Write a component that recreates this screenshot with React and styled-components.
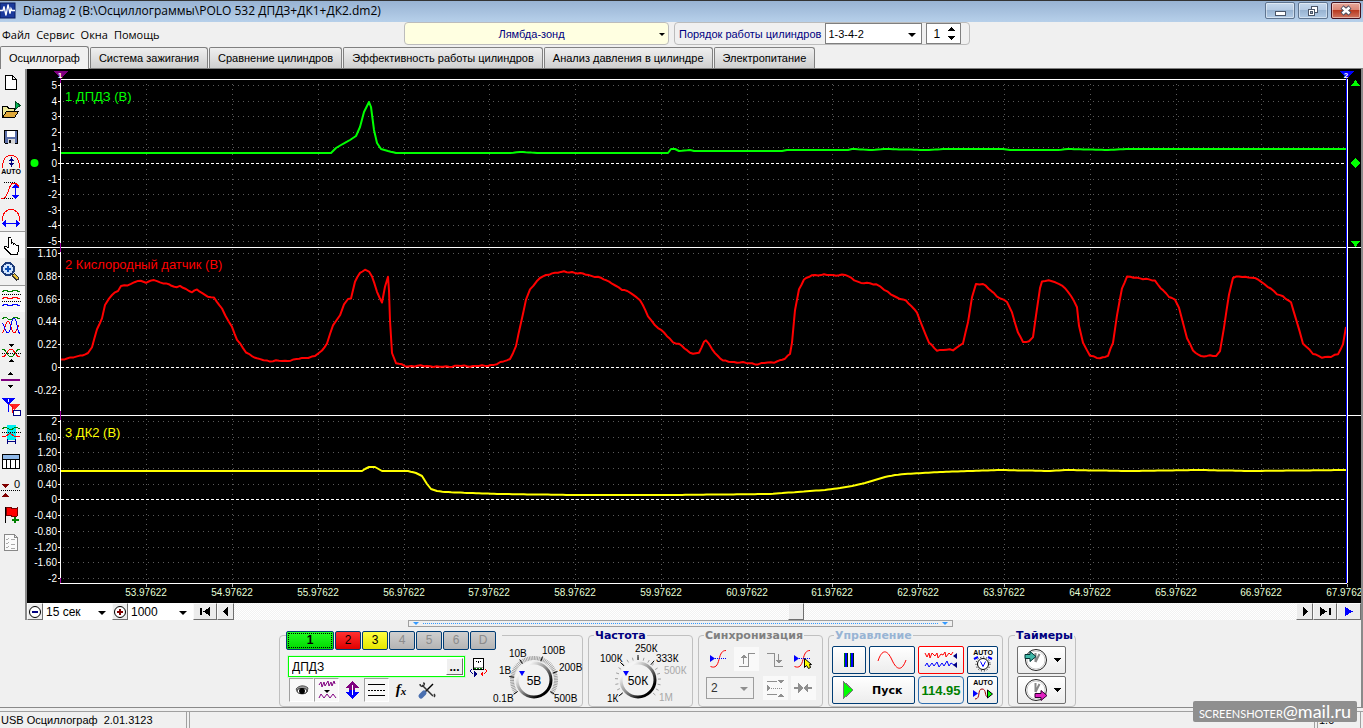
import React, { useState } from 'react';
import styled, { createGlobalStyle, css } from 'styled-components';

const GlobalStyle = createGlobalStyle`
  * {
    box-sizing: border-box;
  }

  body {
    margin: 0;
    background: #f0f0f0;
    color: #000000;
    font-family: 'Liberation Sans', Arial, sans-serif;
    font-size: 12px;
  }

  button, input, select {
    font: inherit;
    color: inherit;
  }
`;

/* ---------- window frame ---------- */

const Window = styled.div`
  display: flex;
  flex-direction: column;
  min-height: 100vh;
  overflow: hidden;
`;

const TitleBar = styled.header`
  display: flex;
  align-items: flex-start;
  height: 22px;
  border-top: 1px solid #333333;
  background: linear-gradient(#98b3d3, #b7d0ea);
`;

const TitleText = styled.h1`
  flex: 1;
  margin: 0 0 0 7px;
  font: 12px/20px 'Open Sans', sans-serif;
`;

const WindowButtons = styled.div`
  display: flex;
  gap: 3px;
  padding: 1px 2px 0 0;
`;

const WindowButton = styled.button`
  display: flex;
  align-items: center;
  justify-content: center;
  width: 30px;
  height: 17px;
  padding: 0;
  border: 1px solid ${(props) => (props.$close ? '#43101d' : '#5f7590')};
  border-radius: 2px;
  background: ${(props) =>
    props.$close
      ? 'linear-gradient(#e6a89b 0%, #d98473 48%, #b93a20 50%, #cf7560 100%)'
      : 'linear-gradient(#c5d8ec 0%, #b4cae3 48%, #98b3d1 50%, #b2cbe6 100%)'};
  box-shadow: inset 0 0 0 1px rgba(255, 255, 255, 0.45);
`;

const Header = styled.div`
  display: flex;
  align-items: flex-start;
  height: 24px;
`;

const Menu = styled.nav`
  display: flex;
  gap: 6px;
  flex: 0 0 404px;
  padding-left: 2px;
`;

const MenuLink = styled.a`
  color: #000000;
  font: 11px/26px 'Open Sans', sans-serif;
  text-decoration: none;
`;

const SelectBox = styled.span`
  position: relative;
  display: block;
  width: ${(props) => props.$width}px;
  height: ${(props) => props.$height}px;

  &::after {
    content: '';
    position: absolute;
    right: ${(props) => props.$inset || 6}px;
    top: 50%;
    margin-top: -1px;
    border: solid transparent;
    border-width: ${(props) => (props.$inset ? '3px 3px 0' : '4px 4px 0')};
    border-top-color: ${(props) => (props.$dim ? '#8f8f8f' : '#000000')};
    pointer-events: none;
  }
`;

const Select = styled.select`
  appearance: none;
  display: block;
  width: 100%;
  height: 100%;
  padding: 0 2px;
  border: 1px solid #7f7f7f;
  border-radius: 0;
  background: #ffffff;
  outline: none;
  font-size: 11px;

  ${(props) => props.$plain && css`
    border-color: #ffffff;
    font-size: 12px;
  `}

  ${(props) => props.$mode && css`
    padding-right: 12px;
    border-color: #bcbcbc;
    border-radius: 4px;
    background: #ffffe1;
    color: #000080;
    text-align: center;
    text-align-last: center;
  `}

  ${(props) => props.$dim && css`
    padding: 0 4px;
    border-color: #9d9d9d;
    background: #f0f0f0;
    color: #333333;
    font-size: 12px;
    opacity: 1;
  `}
`;

const OrderBox = styled.div`
  display: flex;
  align-items: center;
  gap: 4px;
  height: 23px;
  margin-left: 5px;
  padding: 0 8px 0 4px;
  border: 1px solid #bcbcbc;
  border-radius: 4px;
`;

const OrderLabel = styled.label`
  color: #000080;
  font-size: 11px;
`;

const Spinner = styled.span`
  display: flex;
  align-items: center;
  width: 35px;
  height: 21px;
  border: 1px solid #7f7f7f;
  background: #ffffff;
`;

const SpinnerInput = styled.input`
  width: 18px;
  padding: 0 0 0 6px;
  border: 0;
  outline: none;
  background: none;
`;

/* ---------- tabs ---------- */

const Tabs = styled.div`
  display: flex;
  align-items: flex-end;
  gap: 1px;
  height: 23px;
  border-bottom: 1px solid #808080;
`;

const Tab = styled.button`
  height: ${(props) => (props.$active ? 23 : 21)}px;
  margin-bottom: ${(props) => (props.$active ? -1 : 0)}px;
  padding: 0 8px;
  border: 1px solid #808080;
  border-bottom: 0;
  border-radius: 2px 3px 0 0;
  background: ${(props) => (props.$active ? '#f0f0f0' : 'linear-gradient(#efefef, #cfcfcf)')};
  font-size: 11px;
  white-space: nowrap;
`;

/* ---------- scope ---------- */

const Workspace = styled.main`
  display: flex;
  border-right: 2px solid #8a8a8a;
`;

const Toolbar = styled.div`
  display: flex;
  flex-direction: column;
  flex: 0 0 27px;
  border-right: 2px solid #8a8a8a;
`;

const ToolButton = styled.button`
  display: flex;
  align-items: center;
  justify-content: center;
  height: 27px;
  padding: 0 3px 0 0;
  border: 0;
  border-top: 1px solid ${(props) => (props.$divided ? '#9a9a9a' : 'transparent')};
  background: ${(props) => (props.$pressed ? '#f8f8f8' : 'none')};
`;

const ScopeColumn = styled.div`
  display: flex;
  flex: 1;
  flex-direction: column;
  min-width: 0;
`;

const ScopeSvg = styled.svg`
  display: block;
  width: 100%;
  background: #000000;
  font-family: 'Liberation Sans', Arial, sans-serif;
`;

const ScrollRow = styled.div`
  display: flex;
  align-items: stretch;
  height: 17px;
`;

const ScrollButton = styled.button`
  display: flex;
  align-items: center;
  justify-content: center;
  width: ${(props) => props.$width}px;
  padding: 0;
  border: 1px solid;
  border-color: #fafafa #6f6f6f #6f6f6f #fafafa;
  background: #ececec;
`;

const ScrollRange = styled.input`
  appearance: none;
  flex: 1;
  min-width: 0;
  height: 17px;
  margin: 0;
  background: repeating-conic-gradient(#ffffff 0% 25%, #f2f2f2 0% 50%) 0 0 / 2px 2px;

  &::-webkit-slider-thumb {
    appearance: none;
    width: 16px;
    height: 17px;
    border: 1px solid;
    border-color: #fafafa #6f6f6f #6f6f6f #fafafa;
    background: #ececec;
  }
`;

const SplitterRow = styled.div`
  display: flex;
  justify-content: center;
  height: 9px;
  border-right: 2px solid #8a8a8a;
`;

const Splitter = styled.div`
  display: flex;
  align-items: center;
  gap: 4px;
  width: 40%;
  height: 7px;
  padding: 0 4px;
  border: 1px solid #a0a0a0;

  &::before, &::after {
    content: '';
    border: solid transparent;
    border-width: 3px 3px 0;
    border-top-color: #3399ff;
  }
`;

const SplitterDots = styled.span`
  flex: 1;
  border-top: 1px dotted #3399ff;
`;

/* ---------- control panel ---------- */

const Controls = styled.div`
  display: flex;
  flex: 1;
  align-items: flex-start;
  justify-content: center;
  gap: 5px;
  padding-right: 6px;
  border-right: 2px solid #8a8a8a;
  border-bottom: 1px solid #8a8a8a;
`;

const ChannelPanel = styled.section`
  display: flex;
  width: 304px;
  height: 72px;
  margin-top: 6px;
  border: 1px solid #c0c0c0;
  border-radius: 4px;
`;

const ChannelLeft = styled.div`
  flex: 0 0 211px;
  min-width: 0;
  margin-top: -5px;
  padding-left: 6px;
`;

const ChannelRow = styled.div`
  display: flex;
  gap: 1px;
  width: max-content;
  padding-right: 6px;
  background: #f0f0f0;
`;

const ChannelButton = styled.button`
  width: ${(props) => (props.$selected ? 48 : 26)}px;
  height: 19px;
  padding: 0;
  border: 1px solid #003c74;
  border-radius: 2px;
  background: ${(props) => props.$fill};
  color: ${(props) => (props.$off ? '#8c8c8c' : '#000000')};
  font-size: 12px;
  line-height: 15px;
  font-weight: ${(props) => (props.$selected ? 'bold' : 'normal')};

  ${(props) => props.$selected && css`
    outline: 1px dotted #000000;
    outline-offset: -3px;
  `}
`;

const NameRow = styled.div`
  display: flex;
  align-items: center;
  gap: 4px;
  margin: 6px 0 1px 2px;
`;

const NameField = styled.div`
  display: flex;
  width: 177px;
  height: 21px;
  border: 1px solid #00ff00;
  outline: 1px solid #d4f5d4;
  background: #ffffff;
`;

const NameInput = styled.input`
  flex: 1;
  min-width: 0;
  padding: 0 3px;
  border: 0;
  outline: none;
  background: none;
`;

const DotsButton = styled.button`
  width: 17px;
  margin: 1px;
  padding: 0;
  border: 1px solid;
  border-color: #ffffff #6f6f6f #6f6f6f #ffffff;
  background: #f0f0f0;
  font-weight: bold;
  line-height: 8px;
`;

const IconRow = styled.div`
  display: flex;
  padding-left: 3px;
`;

const IconButton = styled.button`
  display: flex;
  align-items: center;
  justify-content: center;
  width: 25px;
  height: 24px;
  padding: 0;
  border: 1px solid transparent;
  background: none;

  ${(props) => props.$pressed && css`
    border-color: #a0a0a0 #ffffff #ffffff #a0a0a0;
    background: #f8f8f8;
  `}

  ${(props) => props.$light && css`
    background: #f9f9f9;
  `}
`;

const Group = styled.fieldset`
  width: ${(props) => props.$width}px;
  height: 78px;
  min-width: 0;
  margin: 0;
  padding: 0 ${(props) => props.$pad || 0}px;
  border: 1px solid #c0c0c0;
  border-radius: 4px;
`;

const Legend = styled.legend`
  margin-left: ${(props) => props.$shift || 0}px;
  padding: 0 1px;
  color: ${(props) => props.$color || '#000080'};
  font: bold 11px/13px 'DejaVu Sans', sans-serif;
`;

const SyncGrid = styled.div`
  display: grid;
  grid-template-columns: repeat(4, 24px);
  align-items: center;
  justify-content: space-between;
  row-gap: 5px;
  padding-top: 5px;
`;

const SyncLevel = styled.div`
  grid-column: span 2;
`;

const ButtonGrid = styled.div`
  display: grid;
  grid-template-columns: ${(props) => props.$columns};
  grid-auto-rows: 28px;
  gap: 2px 3px;
  padding-top: 4px;
`;

const PanelButton = styled.button`
  display: flex;
  align-items: center;
  justify-content: center;
  gap: ${(props) => props.$gap || 0}px;
  padding: 0;
  border: 1px solid ${(props) => props.$edge || '#003c74'};
  border-radius: 2px;
  background: linear-gradient(#ffffff, #ececec);
  font-weight: bold;

  ${(props) => props.$wide && css`
    grid-column: span 2;
    justify-content: flex-start;
    padding-left: 9px;
    gap: 18px;
    font: bold 11px 'DejaVu Sans', sans-serif;
  `}
`;

const RateValue = styled.output`
  display: flex;
  align-items: center;
  justify-content: center;
  border: 1px solid #2f6fb0;
  border-radius: 4px;
  color: #008000;
  font-weight: bold;
  font-size: 13px;
`;

const StatusBar = styled.footer`
  display: flex;
  height: 17px;
  margin-top: 3px;
  border-top: 1px solid #a0a0a0;
  font-size: 11px;
  line-height: 16px;
`;

const StatusCell = styled.div`
  flex: ${(props) => (props.$grow ? '1' : '0 0 auto')};
  width: ${(props) => props.$width}px;
  margin-right: 2px;
  padding-left: 1px;
  border-left: ${(props) => (props.$first ? '0' : '1px solid #a0a0a0')};
  border-right: 1px solid #a0a0a0;
  white-space: pre;
`;

const Badge = styled.div`
  position: absolute;
  right: 6px;
  bottom: 6px;
  height: 21px;
  padding: 0 6px;
  border-radius: 2px;
  background: #8f8f8f;
  color: #ffffff;
  font: 11px/21px Lato, sans-serif;
  white-space: nowrap;
`;

const BadgeHost = styled.span`
  font-size: 18px;
`;

/* ---------- icons ---------- */

const Icon = ({ w = 20, h = 20, children, smooth }) => (
  <svg
    width={w}
    height={h}
    viewBox={`0 0 ${w} ${h}`}
    fill="none"
    stroke="#000"
    shapeRendering={smooth ? 'auto' : 'crispEdges'}
    aria-hidden="true"
  >
    {children}
  </svg>
);

const AppIcon = () => (
  <Icon w={16} h={19} smooth>
    <rect y="2" width="15" height="15" fill="#1b3a9c" stroke="#0b1c60" />
    <path d="M0 9.500h3l1-4 2 9 2-11 2 9 1-5 1 2h3" stroke="#fff" strokeWidth="1.300" />
  </Icon>
);

const toolIcons = [
  ['Новый', <path d="M5.500 3.500h7l4 4v10h-11zM12.500 3.500v4h4" fill="#fff" />],
  ['Открыть', (
    <>
      <path d="M2.500 18.500v-11h5l1 2h6v3" fill="#ece89a" />
      <path d="M2.500 18.500l4-6h12l-4 6z" fill="#e0a93c" />
      <path d="M15 2l5 4.500-5 4z" fill="#00b050" stroke="#004a20" />
    </>
  )],
  ['Сохранить', (
    <>
      <path d="M4.500 4.500h13v13h-12l-1-1z" fill="#5a6ea8" />
      <rect x="7" y="5" width="8" height="6" fill="#fff" stroke="none" />
      <rect x="8" y="13" width="7" height="5" fill="#d8d8d8" stroke="none" />
      <rect x="9" y="14" width="2" height="3" fill="#111" stroke="none" />
    </>
  )],
  ['Автомасштаб', (
    <>
      <path d="M2.500 15C2.500 7 5 2.500 11 2.500S19.500 7 19.500 15" stroke="#f00" />
      <path d="M11.500 4v10M10 6.500h3M10 11.500h3M9 7.500h5M9 10.500h5" stroke="#000080" />
      <text x="11" y="21" fontSize="7" fontWeight="bold" textAnchor="middle" fill="#000" stroke="none">AUTO</text>
    </>
  )],
  ['Масштаб по вертикали', (
    <>
      <path d="M1 18h3c4 0 5-15 9-15h3l3 4" stroke="#f00" />
      <path d="M4 2.500h12M4 18.500h9" strokeDasharray="1 1" />
      <path d="M15.500 6v11" stroke="#00f" />
      <path d="M12 8l3.500-4L19 8zM12 15l3.500 4 3.500-4z" stroke="none" fill="#00f" />
    </>
  )],
  ['Масштаб по горизонтали', (
    <>
      <path d="M2.500 14C2.500 7 5 2.500 11 2.500S19.500 7 19.500 14" stroke="#f00" />
      <path d="M4 16.500h14" stroke="#00f" />
      <path d="M6 13l-4 3.500 4 3.500zM16 13l4 3.500-4 3.500z" stroke="none" fill="#00f" />
    </>
  )],
  ['Рука', (
    <path
      d="M8.500 13V4.500c0-2 2.500-2 2.500 0V10c0-1.500 2.500-1.500 2.500 0v1c0-1.500 2.500-1.200 2.500 0v1c0-1.500 2.800-1.200 2.800.5V16l-1.800 4.500H11L5 14.500c-1.500-2 .5-3 2-1.500z"
      fill="#fff"
    />
  )],
  ['Лупа', (
    <>
      <circle cx="8" cy="8" r="6" fill="#cfe4ff" stroke="#1b3b7a" strokeWidth="2" />
      <path d="M8 5v6M5 8h6" stroke="#0b4fb5" strokeWidth="2" />
      <path d="M13 13l5 6" stroke="#333" strokeWidth="4" />
      <path d="M14 14l4 4" stroke="#e8c23a" strokeWidth="2" />
    </>
  )],
  ['Каналы раздельно', (
    <>
      <path d="M2 4l3-2 5 2 5-2 5 2" stroke="#008000" />
      <path d="M2 11l3-2 5 2 5-2 5 2" stroke="#f00" />
      <path d="M2 18l3-2 5 2 5-2 5 2" stroke="#00f" />
      <path d="M2 6.500h19M2 13.500h19" strokeDasharray="1 1" />
    </>
  )],
  ['Каналы вместе', (
    <>
      <path d="M2 4l3-2 5 3 5-3 5 2" stroke="#008000" />
      <path d="M2 18c3 0 3-12 6-12s3 12 6 12 4-8 5-8" stroke="#f00" />
      <path d="M2 8c2 0 3 10 6 10s3-15 6-15 3 14 6 16" stroke="#00f" />
    </>
  )],
  ['Совместить', (
    <>
      <path d="M2 7c5 0 5 8 9 8s4-8 9-8" stroke="#008000" />
      <path d="M2 15c5 0 5-8 9-8s4 8 9 8" stroke="#f00" />
      <path d="M2 11.500h19" strokeDasharray="1 1" />
      <path d="M9 2h5l-2.500 3zM9 20h5l-2.500-3z" fill="#000" stroke="none" />
    </>
  )],
  ['Разделитель', (
    <>
      <path d="M1 11h19" stroke="#800080" strokeWidth="2" />
      <path d="M8 6h5l-2.500-3zM8 16h5l-2.500 3z" fill="#000" stroke="none" />
    </>
  )],
  ['Маркеры', (
    <>
      <path d="M2 2h13L8.500 9z" fill="#00f" stroke="none" />
      <path d="M8.500 5v11" stroke="#00f" />
      <path d="M8 3.500h1M8.500 3v3" stroke="#fff" />
      <path d="M9 8h11l-6 6z" fill="#f22" stroke="none" />
      <path d="M12.500 10v7" stroke="#f00" />
      <rect x="13.500" y="14.500" width="7" height="5" fill="#fff" stroke="#000080" />
    </>
  )],
  ['Участок', (
    <>
      <rect x="7" y="2" width="9" height="15" fill="#00f0f0" stroke="none" />
      <path d="M2 6l3-2 6 3 5-3 4 2" stroke="#008000" />
      <path d="M2 13l3 1 5-4 5 4 5-1" stroke="#f00" />
      <path d="M2 9.500h19" strokeDasharray="1 1" />
      <path d="M7.500 16v5M15.500 16v5M8 18.500h7" stroke="#000080" />
    </>
  )],
  ['Таблица', (
    <>
      <path d="M2.500 4.500h17v14h-17z" fill="#fff" />
      <path d="M3 5h16v4H3z" fill="#8fb8e8" stroke="none" />
      <path d="M2 9.500h18M6.500 9v9M10.500 9v9M15.500 9v9" />
    </>
  )],
  ['Ноль', (
    <>
      <path d="M1 13.500h19" strokeDasharray="1 1" />
      <path d="M2 7h7l-3.500 4zM2 20h7l-3.500-4z" fill="#800000" stroke="none" />
      <text x="17" y="11" fontSize="11" textAnchor="middle" fill="#000" stroke="none">0</text>
    </>
  )],
  ['Метка', (
    <>
      <path d="M5.500 3v16" />
      <path d="M6 4l4-1 3 2 4-1v8l-4 1-3-2-4 1z" fill="#f00" stroke="#700" />
      <path d="M14.500 13v6M11.500 16h7" stroke="#008000" strokeWidth="2" />
    </>
  )],
  ['Отчёт', (
    <>
      <path d="M4.500 3.500h10l3 3v13h-13zM14.500 3.500v3h3" fill="#fafafa" stroke="#888" />
      <path d="M6 8l1 1 2-2M6 12l1 1 2-2M6 16l1 1 2-2M11 8h4M11 13h4M11 17h4" stroke="#aaa" />
    </>
  )],
];

const EyeIcon = () => (
  <Icon smooth>
    <path d="M4 9c3-4 9-4 12-1l-1 4c-3 3-8 2-9 0z" fill="#999" stroke="#555" />
    <ellipse cx="10" cy="11" rx="5" ry="2.500" fill="#fff" stroke="#222" />
    <circle cx="10" cy="11" r="2.500" fill="#000" />
  </Icon>
);

const NoiseIcon = () => (
  <Icon smooth>
    <path d="M2 5l2-3 1 5 2-5 1 4 3-5 1 5 2-4 1 4 2-5 1 3" stroke="#800080" />
    <path d="M2 18l2-4 3 4 3-4 3 4 3-4 3 4" stroke="#800080" />
    <path d="M7 10h6l-3 3z" fill="#000" stroke="none" />
  </Icon>
);

const UpDownIcon = () => (
  <Icon>
    <path d="M10 1l7 7h-4v2H7V8H3z" fill="#800080" stroke="none" />
    <path d="M10 19l7-7h-4v-2H7v2H3z" fill="#00f" stroke="none" />
    <path d="M10 5v10" stroke="#fff" />
  </Icon>
);

const LinesIcon = () => (
  <Icon>
    <path d="M1 4.500h17M1 15.500h17" />
    <path d="M1 10.500h17" strokeDasharray="2 1" />
  </Icon>
);

const FxIcon = () => (
  <Icon smooth>
    <text x="9" y="14" fontFamily="Liberation Serif, serif" fontStyle="italic" fontWeight="bold" fontSize="15" textAnchor="middle" fill="#000" stroke="none">
      f<tspan fontSize="11" dy="1">x</tspan>
    </text>
  </Icon>
);

const ToolsIcon = () => (
  <Icon smooth>
    <path d="M16 4L7 13" strokeWidth="1.500" />
    <path d="M4 16l3-3" stroke="#4a70b0" strokeWidth="5" strokeLinecap="round" />
    <path d="M5 5l11 11" stroke="#333" strokeWidth="1.500" />
    <path d="M3 4c0 3 3 3 4 1s0-2-1-2M17 17c1-1 1-2 0-3" stroke="#333" strokeWidth="1.500" />
  </Icon>
);

const MeterIcon = () => (
  <Icon>
    <rect x="4.500" y="1.500" width="10" height="11" fill="#fff" />
    <path d="M5 10.500h9" stroke="#999" />
    <path d="M5 11.500h9" stroke="#008000" strokeDasharray="2 1" />
    <path d="M7 4.500h1M11 4.500h1M9.500 4v2" />
    <path d="M2.500 12L1.500 14l2 3" stroke="#000080" />
    <path d="M3 17h4M5 14l3 3-3 3z" stroke="none" fill="#000080" />
    <path d="M16.500 12l1 2-2 3" stroke="#f00" />
    <path d="M14 14l-3 3 3 3z" stroke="none" fill="#f00" />
  </Icon>
);

const SyncCurve = ({ cursor }) => (
  <Icon smooth>
    <path d="M1.500 17.500c5 2 7-1 8.500-7s3-9 7-9" stroke="#f00" />
    <path d="M6 9.500h12" stroke="#00f" strokeDasharray="1 1" />
    <path d="M1 6l5 3.500L1 13z" fill="#00f" stroke="none" />
    {cursor && <path d="M11.500 9.500v9l2-2 2 3 2-1-1-3h2z" fill="#ff0" />}
  </Icon>
);

const RiseIcon = () => (
  <Icon>
    <path d="M2 17.500h9v-13h7M6.500 7v8" stroke="#8f8f8f" />
    <path d="M4 9h6L7 5z" fill="#8f8f8f" stroke="none" />
  </Icon>
);

const FallIcon = () => (
  <Icon>
    <path d="M2 4.500h7v13h9M13.500 5v8" stroke="#8f8f8f" />
    <path d="M11 11h6l-3 4z" fill="#8f8f8f" stroke="none" />
  </Icon>
);

const WindowLevelIcon = () => (
  <Icon>
    <path d="M2 3.500h10M2 16.500h10" stroke="#8f8f8f" />
    <path d="M6 10.500h11" stroke="#8f8f8f" strokeDasharray="1 1" />
    <path d="M2 7l4 3-4 3zM12 2h7l-3 4zM12 19h7l-3-4z" fill="#8f8f8f" stroke="none" />
  </Icon>
);

const SqueezeIcon = () => (
  <Icon>
    <path d="M1 10h5M14 10h5" stroke="#8f8f8f" strokeWidth="2" />
    <path d="M5 5l5 5-5 5zM15 5l-5 5 5 5z" fill="#8f8f8f" stroke="none" />
  </Icon>
);

const ClockButtonIcon = ({ out }) => (
  <Icon w={26} h={26} smooth>
    <circle cx="13" cy="13" r="10.500" fill="#fff" stroke="#222" />
    <circle cx="13" cy="13" r="9" stroke="#ccc" />
    <path d="M12.500 15V6M12.500 15l4-8" stroke="#888" strokeWidth="2" />
    {out ? (
      <path d="M12 16.500h6v-3l6 5-6 5v-3h-6z" fill="#e020c0" stroke="#300030" />
    ) : (
      <path d="M2 7.500h5v-3l6 5-6 5v-3H2z" fill="#40b8a8" stroke="#003030" />
    )}
  </Icon>
);

const DropArrow = () => (
  <Icon w={8} h={5}>
    <path d="M0 0h8L4 4z" fill="#000" stroke="none" />
  </Icon>
);

/* ---------- oscillogram ---------- */

const LEFT = 61;
const RIGHT = 1347;
const timeTicks = Array.from({ length: 15 }, (_, i) => ({
  x: Math.round(146.4 + i * 85.76),
  label: `${53 + i}.97622`,
}));

const channels = [
  {
    title: '1 ДПДЗ (В)',
    color: '#00ff00',
    titleY: 101,
    firstY: 85,
    step: 15.6,
    zero: 163,
    noise: 0,
    labels: ['5', '4', '3', '2', '1', '0', '-1', '-2', '-3', '-4', '-5'],
    points:
      '61,153 331,153 336,148 341,145 350,140 356,136 360,127 364,112 369,102 371,107 374,130 377,143 381,149 388,151 396,153 510,153 520,152 540,153 668,153 671,149 675,149 679,151 690,150 694,151 782,151 787,150 848,150 852,149 872,150 884,149 926,150 946,149 1003,149 1010,150 1058,150 1068,149 1108,150 1126,149 1346,149',
  },
  {
    title: '2 Кислородный датчик (В)',
    color: '#ff0000',
    titleY: 269,
    firstY: 253,
    step: 22.8,
    zero: 367,
    noise: 0.4,
    labels: ['1.10', '0.88', '0.66', '0.44', '0.22', '0', '-0.22'],
    points:
      '61,360 67,358 77,357 88,353 92,347 97,330 102,318 105,305 109,298 112,295 118,291 121,286 131,284 138,281 146,282 154,280 160,283 166,283 177,288 180,286 192,292 197,290 205,295 214,298 222,309 232,327 237,340 246,352 257,359 270,361 285,361 305,358 315,356 322,351 327,343 333,325 340,316 344,304 348,299 351,298 355,282 360,273 365,270 369,271 372,276 377,292 382,303 385,287 388,276 389,290 390,320 392,353 396,363 405,366 430,366 440,367 455,366 485,366 497,364 510,359 516,346 521,323 526,300 530,289 540,278 552,273 564,272 572,272 583,274 598,277 612,283 622,290 630,292 640,300 648,316 655,325 664,333 673,342 679,344 690,353 699,353 704,342 706,341 709,344 715,353 723,361 734,362 758,364 774,362 785,359 790,354 792,342 795,310 799,289 804,280 812,275 845,275 851,278 861,283 876,284 880,286 884,290 894,296 906,301 917,312 922,326 929,343 937,350 953,350 963,343 968,323 972,297 976,284 983,284 997,296 1007,302 1012,313 1018,332 1023,342 1029,342 1033,337 1036,315 1040,288 1042,281 1052,281 1062,285 1071,296 1077,307 1079,325 1083,343 1090,356 1100,358 1108,356 1113,343 1117,315 1122,288 1127,277 1140,278 1155,281 1169,297 1175,300 1179,307 1183,323 1187,338 1193,351 1201,356 1216,356 1220,351 1224,327 1229,295 1233,278 1239,276 1258,279 1277,294 1283,296 1291,303 1296,319 1303,343 1313,354 1322,357 1331,357 1338,354 1343,344 1346,327',
  },
  {
    title: '3 ДК2 (В)',
    color: '#ffff00',
    titleY: 437,
    firstY: 421,
    step: 15.7,
    zero: 499,
    noise: 0,
    labels: ['2', '1.60', '1.20', '0.80', '0.40', '0', '-0.40', '-0.80', '-1.20', '-1.60', '-2'],
    points:
      '61,471 362,471 365,469 369,467 375,467 382,471 408,471 416,473 422,476 427,484 431,489 437,491 445,492 470,493 500,494 575,495 670,495 770,494 810,491 825,490 840,488 852,486 865,483 875,480 885,477 895,475 905,474 940,472 970,471 1000,470 1050,471 1065,470 1130,471 1200,470 1250,471 1346,470',
  },
];

// Resamples the key points every few pixels and adds a little ripple.
const sampleTrace = (points, noise) => {
  const keys = points.split(' ').map((pair) => pair.split(',').map(Number));
  const out = [];
  keys.slice(1).forEach(([x2, y2], i) => {
    const [x1, y1] = keys[i];
    const count = Math.max(1, Math.round((x2 - x1) / 3));
    for (let k = 0; k < count; k += 1) {
      const x = x1 + ((x2 - x1) * k) / count;
      const ripple = (Math.sin(x * 0.7) + Math.sin(x * 0.31)) * noise;
      out.push(`${x.toFixed(1)},${(y1 + ((y2 - y1) * k) / count + ripple).toFixed(1)}`);
    }
  });
  out.push(keys[keys.length - 1].join(','));
  return out.join(' ');
};

const Channel = ({ title, color, titleY, firstY, step, zero, noise, labels, points }) => (
  <g>
    {labels.map((label, i) => {
      const y = label === '0' ? zero : Math.round(firstY + i * step);
      return (
        <g key={label}>
          {label === '0' ? (
            <path d={`M${LEFT} ${y + 0.5}H${RIGHT}`} stroke="#fff" strokeDasharray="3 2" />
          ) : (
            <path d={`M${LEFT + 2} ${y + 0.5}H${RIGHT}`} stroke="#5a5a5a" strokeDasharray="1 4" />
          )}
          <path d={`M58 ${y + 0.5}H61`} stroke="#fff" />
          <text x="57" y={y + 4} fontSize="10" textAnchor="end" fill="#fff">{label}</text>
        </g>
      );
    })}
    <text x="65" y={titleY} fontSize="13" fill={color}>{title}</text>
    <polyline
      points={sampleTrace(points, noise)}
      fill="none"
      stroke={color}
      strokeWidth="2"
      strokeLinejoin="round"
      shapeRendering="auto"
    />
  </g>
);

const Scope = () => (
  <ScopeSvg viewBox="27 69 1334 534" shapeRendering="crispEdges" role="img" aria-label="Осциллограф">
    {timeTicks.map(({ x, label }) => (
      <g key={label}>
        <path d={`M${x + 0.5} 84V583`} stroke="#5a5a5a" strokeDasharray="1 4" />
        <path d={`M${x + 0.5} 584V587`} stroke="#aaa" />
        <text x={x} y="596" fontSize="10" textAnchor="middle" fill="#e6ffd8">{label}</text>
      </g>
    ))}
    {channels.map((channel) => (
      <Channel key={channel.title} {...channel} />
    ))}
    <path d="M61 79.500H1347M27 247.500H1361M27 415.500H1361M60 583.500H1347M60.500 80V583" stroke="#fff" />
    <path d="M60.500 74V83M60.500 243V252M60.500 411V420M60.500 578V583" stroke="#a000a0" />
    <path d="M53 71h15l-7 7z" fill="#800080" />
    <path d="M1346.500 78V583" stroke="#00f" />
    <path d="M1347.500 79V583" stroke="#fff" />
    <path d="M1339 71h15l-7 7z" fill="#00f" />
    <text x="60" y="78" fontSize="8" fontWeight="bold" textAnchor="middle" fill="#fff">1</text>
    <text x="1346" y="78" fontSize="8" fontWeight="bold" textAnchor="middle" fill="#fff">2</text>
    <path d="M1351 86h9l-4.500-6zM1351 241h9l-4.500 6zM1355.500 158l5 5-5 5-5-5z" fill="#0f0" />
    <circle cx="34.500" cy="163" r="4" fill="#0f0" shapeRendering="auto" />
  </ScopeSvg>
);

/* ---------- dials ---------- */

const DialSvg = styled.svg`
  flex: none;
  overflow: visible;
  font: 10px 'Liberation Sans', sans-serif;
`;

const polar = (cx, cy, r, deg) => {
  const a = (deg * Math.PI) / 180;
  return `${(cx + r * Math.cos(a)).toFixed(1)} ${(cy - r * Math.sin(a)).toFixed(1)}`;
};

const Dial = ({ id, w, cx, cy, value, labels, ticks, dense }) => (
  <DialSvg width={w} height="68" viewBox={`0 0 ${w} 68`} role="img" aria-label={value}>
    <defs>
      <linearGradient id={id} x1="0" y1="0" x2="1" y2="1">
        <stop offset="0.2" stopColor="#f4f4f4" />
        <stop offset="0.5" stopColor="#8a8a8a" />
        <stop offset="0.8" stopColor="#000" />
      </linearGradient>
    </defs>
    {Array.from({ length: dense ? 61 : 19 }, (_, i) => {
      const a = dense ? 215 - i * 4.2 : 220 - i * 14.5;
      return <path key={a} d={`M${polar(cx, cy, 20, a)}L${polar(cx, cy, dense ? 24 : 23, a)}`} stroke="#a0a0a0" />;
    })}
    {ticks.map((a) => (
      <path key={a} d={`M${polar(cx, cy, 20, a)}L${polar(cx, cy, 25, a)}`} stroke="#000" />
    ))}
    <circle cx={cx} cy={cy} r="17" fill="#f2f2f2" stroke={`url(#${id})`} strokeWidth="3" />
    <path d={`M${cx - 15} ${cy - 9}h6l-3 5z`} fill="#00f" />
    <text x={cx} y={cy + 5} fontSize="12" textAnchor="middle">{value}</text>
    {labels.map(([text, x, y, off]) => (
      <text key={text} x={x} y={y} fill={off ? '#a8a8a8' : '#000'}>{text}</text>
    ))}
  </DialSvg>
);

const tabs = [
  'Осциллограф',
  'Система зажигания',
  'Сравнение цилиндров',
  'Эффективность работы цилиндров',
  'Анализ давления в цилиндре',
  'Электропитание',
];

const channelButtons = [
  ['1', 'linear-gradient(#22ff22, #00d800)'],
  ['2', 'linear-gradient(#ff3030, #e00000)'],
  ['3', 'linear-gradient(#ffff40, #e6e600)'],
  ['4'],
  ['5'],
  ['6'],
  ['D'],
];

export default function App() {
  const [tab, setTab] = useState(tabs[0]);
  const [channel, setChannel] = useState('1');

  return (
    <Window>
      <GlobalStyle />
      <TitleBar>
        <AppIcon />
        <TitleText>Diamag 2 (B:\Осциллограммы\POLO 532 ДПДЗ+ДК1+ДК2.dm2)</TitleText>
        <WindowButtons>
          <WindowButton aria-label="Свернуть">
            <Icon w={12} h={11}><rect x="1.500" y="6.500" width="10" height="4" fill="#fff" stroke="#4a5568" /></Icon>
          </WindowButton>
          <WindowButton aria-label="Восстановить">
            <Icon w={12} h={12}>
              <path d="M4.500 1.500h6v6h-6z" fill="#fff" stroke="#4a5568" />
              <path d="M1.500 4.500h6v6h-6z" fill="#fff" stroke="#4a5568" />
              <rect x="3.500" y="6.500" width="2" height="2" fill="#9ab" stroke="#4a5568" />
            </Icon>
          </WindowButton>
          <WindowButton $close aria-label="Закрыть">
            <Icon w={12} h={11} smooth>
              <path d="M2 2l8 7M10 2L2 9" stroke="#4a4f60" strokeWidth="4.500" />
              <path d="M2.500 2.500l7 6M9.500 2.500l-7 6" stroke="#fff" strokeWidth="2.500" />
            </Icon>
          </WindowButton>
        </WindowButtons>
      </TitleBar>

      <Header>
        <Menu>
          <MenuLink href="#file">Файл</MenuLink>
          <MenuLink href="#service">Сервис</MenuLink>
          <MenuLink href="#windows">Окна</MenuLink>
          <MenuLink href="#help">Помощь</MenuLink>
        </Menu>
        <SelectBox $width={265} $height={23} $inset={4}>
          <Select $mode aria-label="Режим">
            <option>Лямбда-зонд</option>
          </Select>
        </SelectBox>
        <OrderBox>
          <OrderLabel htmlFor="order">Порядок работы цилиндров</OrderLabel>
          <SelectBox $width={97} $height={21}>
            <Select id="order">
              <option>1-3-4-2</option>
            </Select>
          </SelectBox>
          <Spinner>
            <SpinnerInput aria-label="Номер цилиндра" defaultValue="1" />
            <Icon w={14} h={15}>
              <path d="M2 5h8L6 1zM2 10h8l-4 4z" fill="#000" stroke="none" />
            </Icon>
          </Spinner>
        </OrderBox>
      </Header>

      <Tabs role="tablist">
        {tabs.map((name) => (
          <Tab key={name} role="tab" aria-selected={tab === name} $active={tab === name} onClick={() => setTab(name)}>
            {name}
          </Tab>
        ))}
      </Tabs>

      <Workspace>
        <Toolbar>
          {toolIcons.map(([name, shape], i) => (
            <ToolButton key={name} aria-label={name} $divided={i === 6 || i === 8} $pressed={i === 6 || i === 8}>
              <Icon w={22} h={22}>{shape}</Icon>
            </ToolButton>
          ))}
        </Toolbar>
        <ScopeColumn>
          <Scope />
          <ScrollRow>
            <ScrollButton $width={16} aria-label="Уменьшить">
              <Icon w={14} h={14} smooth>
                <circle cx="7" cy="7" r="5.500" fill="#fff" />
                <path d="M4 7h6" stroke="#000080" strokeWidth="2" />
              </Icon>
            </ScrollButton>
            <SelectBox $width={69} $height={17}>
              <Select $plain aria-label="Длительность">
                <option>15 сек</option>
              </Select>
            </SelectBox>
            <ScrollButton $width={16} aria-label="Увеличить">
              <Icon w={14} h={14} smooth>
                <circle cx="7" cy="7" r="5.500" fill="#fff" />
                <path d="M4 7h6M7 4v6" stroke="#800000" strokeWidth="2" />
              </Icon>
            </ScrollButton>
            <SelectBox $width={65} $height={17}>
              <Select $plain aria-label="Точек">
                <option>1000</option>
              </Select>
            </SelectBox>
            <ScrollButton $width={24} aria-label="В начало">
              <Icon w={12} h={9}>
                <path d="M1.500 1v7" strokeWidth="2" />
                <path d="M11 0v9L4 4.500z" fill="#000" stroke="none" />
              </Icon>
            </ScrollButton>
            <ScrollButton $width={17} aria-label="Назад">
              <Icon w={6} h={9}><path d="M5 0v9L0 4.500z" fill="#000" stroke="none" /></Icon>
            </ScrollButton>
            <ScrollRange type="range" min="0" max="100" defaultValue="53" aria-label="Прокрутка" />
            <ScrollButton $width={17} aria-label="Вперёд">
              <Icon w={6} h={9}><path d="M1 0v9l5-4.500z" fill="#000" stroke="none" /></Icon>
            </ScrollButton>
            <ScrollButton $width={24} aria-label="В конец">
              <Icon w={12} h={9}>
                <path d="M10.500 1v7" strokeWidth="2" />
                <path d="M1 0v9l7-4.500z" fill="#000" stroke="none" />
              </Icon>
            </ScrollButton>
            <ScrollButton $width={24} aria-label="Воспроизвести">
              <Icon w={10} h={9}><path d="M1 0v9l8-4.500z" fill="#00f" stroke="none" /></Icon>
            </ScrollButton>
          </ScrollRow>
        </ScopeColumn>
      </Workspace>

      <SplitterRow>
        <Splitter><SplitterDots /></Splitter>
      </SplitterRow>

      <Controls>
        <ChannelPanel>
          <ChannelLeft>
            <ChannelRow>
              {channelButtons.map(([name, fill]) => (
                <ChannelButton
                  key={name}
                  $fill={fill || 'linear-gradient(#cfcfcf, #b4b4b4)'}
                  $off={!fill}
                  $selected={channel === name}
                  onClick={() => setChannel(name)}
                >
                  {name}
                </ChannelButton>
              ))}
            </ChannelRow>
            <NameRow>
              <NameField>
                <NameInput aria-label="Имя канала" defaultValue="ДПДЗ" />
                <DotsButton aria-label="Выбрать">...</DotsButton>
              </NameField>
              <MeterIcon />
            </NameRow>
            <IconRow>
              <IconButton $pressed aria-label="Показать"><EyeIcon /></IconButton>
              <IconButton $pressed aria-label="Фильтр"><NoiseIcon /></IconButton>
              <IconButton aria-label="Инверсия"><UpDownIcon /></IconButton>
              <IconButton $pressed aria-label="Линии"><LinesIcon /></IconButton>
              <IconButton aria-label="Функция"><FxIcon /></IconButton>
              <IconButton aria-label="Настройки"><ToolsIcon /></IconButton>
            </IconRow>
          </ChannelLeft>
          <Dial
            id="range"
            w={90}
            cx={43}
            cy={44}
            value="5В"
            dense
            ticks={[215, 172, 125, 70, 20, -35]}
            labels={[['0.1В', 2, 66], ['1В', 8, 38], ['10В', 18, 21], ['100В', 51, 18], ['200В', 68, 35], ['500В', 63, 66]]}
          />
        </ChannelPanel>

        <Group $width={105}>
          <Legend $shift={5}>Частота</Legend>
          <Dial
            id="rate"
            w={103}
            cx={49}
            cy={38}
            value="50К"
            ticks={[220, 135, 90, 50]}
            labels={[['1К', 18, 60], ['100К', 11, 20], ['250К', 46, 10], ['333К', 67, 20], ['500К', 75, 32, true], ['1М', 70, 59, true]]}
          />
        </Group>

        <Group $width={125} $pad={7}>
          <Legend $color="#808080" $shift={-2}>Синхронизация</Legend>
          <SyncGrid>
            <IconButton aria-label="Уровень"><SyncCurve /></IconButton>
            <IconButton $light aria-label="По фронту"><RiseIcon /></IconButton>
            <IconButton aria-label="По спаду"><FallIcon /></IconButton>
            <IconButton aria-label="Выбор уровня"><SyncCurve cursor /></IconButton>
            <SyncLevel>
              <SelectBox $width={48} $height={22} $dim>
                <Select $dim disabled aria-label="Канал синхронизации">
                  <option>2</option>
                </Select>
              </SelectBox>
            </SyncLevel>
            <IconButton $light aria-label="Окно"><WindowLevelIcon /></IconButton>
            <IconButton $light aria-label="Сжать"><SqueezeIcon /></IconButton>
          </SyncGrid>
        </Group>

        <Group $width={175} $pad={3}>
          <Legend $shift={2} $color="#98b4d4">Управление</Legend>
          <ButtonGrid $columns="34px 46px 46px 31px">
            <PanelButton aria-label="Пауза">
              <Icon w={14} h={16}>
                <path d="M2 1h4v14H2zM8 1h4v14H8z" fill="#00f" stroke="none" />
                <path d="M2.500 1v14M8.500 1v14" stroke="#008000" />
                <path d="M5.500 1v14M11.500 1v14" stroke="#003000" />
              </Icon>
            </PanelButton>
            <PanelButton aria-label="Осциллограмма">
              <Icon w={30} h={20} smooth>
                <path d="M1 11C5-1 10-1 15 10s10 11 14 0" stroke="#f00" />
              </Icon>
            </PanelButton>
            <PanelButton $edge="#ff0000" aria-label="Самописец">
              <Icon w={36} h={22} smooth>
                <path d="M2 4l2 4 2-4 1 5 2-5 3 3 2-3 1 5 3-4 2 1 2-3 1 5 3-4 2 2 2-3" stroke="#f00" />
                <path d="M2 17l2-3 2 4 3-4 2 3 3-4 2 5 3-4 2 3 3-5 2 5 2-3 3 2" stroke="#00f" />
                <path d="M34 4v6l-4-3zM34 13v6l-4-3z" fill="#000080" stroke="none" />
              </Icon>
            </PanelButton>
            <PanelButton aria-label="Автодиапазон">
              <Icon w={28} h={26} smooth>
                <text x="14" y="8" fontSize="7" fontWeight="bold" textAnchor="middle" fill="#000" stroke="none">AUTO</text>
                <circle cx="14" cy="17" r="5.500" fill="#fff" />
                <circle cx="14" cy="17" r="7" strokeDasharray="1 2" />
                <path d="M11.500 14.500l2.500 5 2.500-5" stroke="#00f" />
                <path d="M5 12l4-2M23 12l-4-2" stroke="#00f" strokeWidth="2" />
              </Icon>
            </PanelButton>
            <PanelButton $wide>
              <Icon w={12} h={18}><path d="M1 0l10 9-10 9z" fill="#0f0" stroke="#777" /></Icon>
              Пуск
            </PanelButton>
            <RateValue>114.95</RateValue>
            <PanelButton aria-label="Автозапуск">
              <Icon w={28} h={26} smooth>
                <text x="14" y="8" fontSize="7" fontWeight="bold" textAnchor="middle" fill="#000" stroke="none">AUTO</text>
                <path d="M6 22c6 0 2-10 7-10s2 8 6 8" stroke="#a00000" />
                <path d="M4 13v7l5-3.500z" fill="#00f" stroke="none" />
                <path d="M18.500 13v8l5-4z" fill="#0f0" />
              </Icon>
            </PanelButton>
          </ButtonGrid>
        </Group>

        <Group $width={68} $pad={8}>
          <Legend $shift={-2}>Таймеры</Legend>
          <ButtonGrid $columns="49px">
            <PanelButton $edge="#707070" $gap={4} aria-label="Таймер запуска">
              <ClockButtonIcon />
              <DropArrow />
            </PanelButton>
            <PanelButton $edge="#707070" $gap={4} aria-label="Таймер остановки">
              <ClockButtonIcon out />
              <DropArrow />
            </PanelButton>
          </ButtonGrid>
        </Group>
      </Controls>

      <StatusBar>
        <StatusCell $first $width={187}>{'USB Осциллограф  2.01.3123'}</StatusCell>
        <StatusCell $grow />
        <StatusCell $width={44}>1.0</StatusCell>
      </StatusBar>
      <Badge>SCREENSHOTER<BadgeHost>@mail.ru</BadgeHost></Badge>
    </Window>
  );
}
